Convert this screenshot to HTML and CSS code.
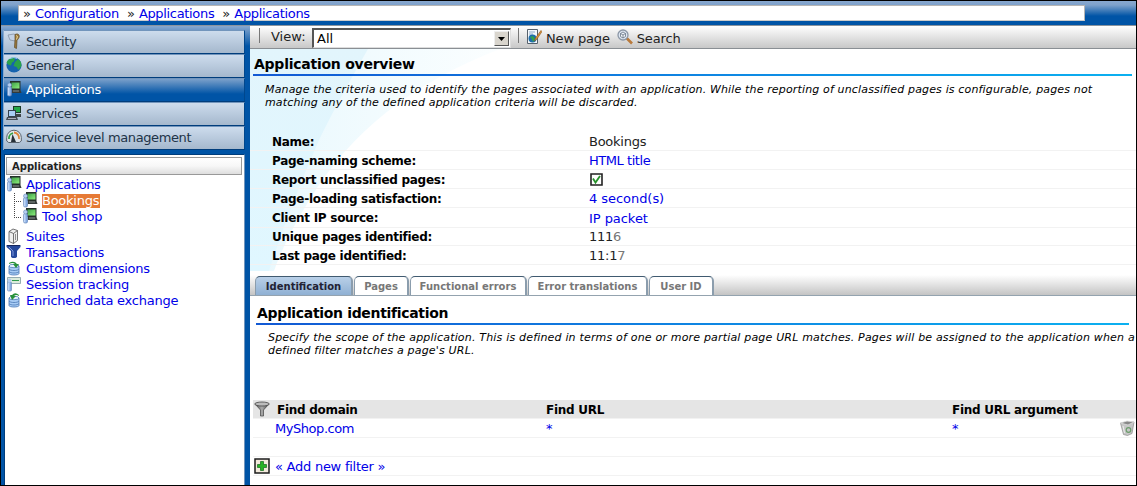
FILE: index.html
```html
<!DOCTYPE html>
<html lang="en">
<head>
<meta charset="utf-8">
<title>Application overview</title>
<link rel="stylesheet" href="styles.css">
</head>
<body>
<svg class="defs" width="0" height="0">
  <defs>
    <linearGradient id="screen" x1="0" y1="0" x2="1" y2="1"><stop offset="0" stop-color="#3f9f48"/><stop offset="1" stop-color="#8cf07c"/></linearGradient>
    <linearGradient id="person" x1="0" x2="1"><stop offset="0" stop-color="#dcecff"/><stop offset="1" stop-color="#6a96d8"/></linearGradient>
    <linearGradient id="metal" x1="0" x2="1"><stop offset="0" stop-color="#555"/><stop offset=".5" stop-color="#aaa"/><stop offset="1" stop-color="#444"/></linearGradient>
  </defs>
  <symbol id="app" viewBox="0 0 16 16">
    <path d="M4 0h10.500v9H4z" fill="#24302a"/><path d="M5.500 1.500h8v6h-8z" fill="url(#screen)"/>
    <path d="M6 9h8.500l1 3H6z" fill="#343b3b"/><path d="M7 10h6" stroke="#85908c"/>
    <rect x="1.500" y="5.500" width="4" height="9.500" rx="1.500" fill="url(#person)" stroke="#6889bb" stroke-width=".7"/><circle cx="3.500" cy="4" r="2" fill="#b6cef0" stroke="#6889bb" stroke-width=".6"/>
  </symbol>
  <symbol id="db" viewBox="0 0 16 16">
    <path d="M3 6v7.500c0 2 10 2 10 0V6z" fill="#a8ccf5" stroke="#4d7ab5" stroke-width=".8"/>
    <ellipse cx="8" cy="6" rx="5" ry="1.700" fill="#e6f2ff" stroke="#4d7ab5" stroke-width=".8"/>
    <path d="M3 9c1 2 9 2 10 0M3 11.500c1 2 9 2 10 0" fill="none" stroke="#4d7ab5" stroke-width=".8"/>
  </symbol>
</svg>

<div class="window">
  <header class="topbar"><nav class="crumbs"><span>»</span><a>Configuration</a><span>»</span><a>Applications</a><span>»</span><a>Applications</a></nav></header>
  <div class="body">
    <aside class="side">
      <ul class="nav">
        <li><svg viewBox="0 0 16 16"><path d="M2 2l6-1 3 2-2 5-5-1z" fill="#c3d2e6" stroke="#7e8b9c" stroke-width=".7"/><path d="M9 1.500c3-1.500 5 .5 4 3l-2 3-.5 8-2-1 .5-8z" fill="#9a783a" stroke="#5d4926" stroke-width=".7"/><path d="M10 2.500l1.500 1-1 3" stroke="#eedb9b" fill="none"/></svg>Security</li>
        <li><svg viewBox="0 0 16 16"><circle cx="8" cy="8" r="7.600" fill="#1663ae"/><path d="M2 3l4-2.500 3 1-1 3-2 1-1 3-3-1-1.500-2zM9 5l3-3 3 3 .5 4-3 4-2-3-3-1z" fill="#2aa24c"/><path d="M4 1.500q4-2 7 0" stroke="#8cc9ed" fill="none"/></svg>General</li>
        <li class="on"><svg><use href="#app"/></svg>Applications</li>
        <li><svg viewBox="0 0 16 16"><path d="M7 1h8v7H7z" fill="#1c3a27"/><path d="M8 2h6v5H8z" fill="#25a648"/><path d="M9 9h6v3H9z" fill="#3d4548"/><path d="M2 5h8v7H2z" fill="#35414e"/><path d="M3 6h6v5H3z" fill="#a9cdf5"/><path d="M1 12h10l1 3H0z" fill="#444c55"/><path d="M2 13.500h8" stroke="#aab"/></svg>Services</li>
        <li><svg viewBox="0 0 16 16"><path d="M.7 12V8.500a7.300 7.300 0 0 1 14.600 0V12l-2 1.500H2.700z" fill="#e1e6eb" stroke="#59636e"/><path d="M3 10a5.500 5.500 0 0 1 4-6" fill="none" stroke="#38a345" stroke-width="1.800"/><path d="M8 3.500a5.500 5.500 0 0 1 5 6.500" fill="none" stroke="#df863a" stroke-width="1.800"/><path d="M6.500 5l3.500 8H5z" fill="#273038"/></svg>Service level management</li>
      </ul>
      <section class="panel">
        <h3>Applications</h3>
        <ul class="tree">
          <li class="root"><svg><use href="#app"/></svg><a>Applications</a></li>
          <li class="child"><svg><use href="#app"/></svg><a class="sel">Bookings</a></li>
          <li class="child last"><svg><use href="#app"/></svg><a>Tool shop</a></li>
          <li><svg viewBox="0 0 16 16"><path d="M3 3.500l4-2.500 4.500 1.500v10l-4 3L3 13.500z" fill="#eee" stroke="#555" stroke-width=".8"/><path d="M3 3.500l4.500 2 4-3M7.500 5.500v10" fill="none" stroke="#555" stroke-width=".8"/><path d="M9.500 6v6" stroke="#777" stroke-width=".8"/></svg><a>Suites</a></li>
          <li><svg viewBox="0 0 16 16"><path d="M.5 1h14v2l-3.500 4v6l-1.500 1h-3L5 13V7L.5 3z" fill="#26499c"/><path d="M3 3l4 4v5" stroke="#809ae0" fill="none"/><path d="M1 1.500h13" stroke="#16265c"/></svg><a>Transactions</a></li>
          <li><svg viewBox="0 0 16 16"><use href="#db"/><path d="M3 3q5-3 8 1h2l-3 4-3-4h2Q7 2 3 4z" fill="#28923a"/></svg><a>Custom dimensions</a></li>
          <li><svg viewBox="0 0 16 16"><path d="M1.500 1.500h13v6h-13z" fill="#dcecdc" stroke="#7e99a2" stroke-width=".8"/><path d="M6 4.500h7" stroke="#2e9b4c"/><rect x="1.500" y="6" width="4" height="9" rx="1" fill="url(#person)" stroke="#7593c0" stroke-width=".7"/><circle cx="3.500" cy="4.500" r="1.900" fill="#b6cef0"/></svg><a>Session tracking</a></li>
          <li><svg viewBox="0 0 16 16"><use href="#db"/><path d="M13 3Q9-.5 6 3H4l2 5 4-4H8q2-2 5 0z" fill="#28923a"/></svg><a>Enriched data exchange</a></li>
        </ul>
      </section>
    </aside>
    <main class="main">
      <div class="toolbar">
        <i class="sep"></i><span class="view">View:</span>
        <div class="select"><span>All</span><b><svg viewBox="0 0 7 4"><path d="M0 0h7L3.500 4z"/></svg></b></div>
        <i class="sep two"></i>
        <svg class="ic" viewBox="0 0 16 16"><path d="M1.500.5h10v14h-10z" fill="#f4f8fc" stroke="#56616c"/><path d="M3 3h6M3 5h4" stroke="#8cabcb"/><circle cx="6.500" cy="9.500" r="4" fill="#1f6dab"/><path d="M4 8l3-1 2 3-2 3-1-3z" fill="#31a34b"/><path d="M15 1.500L9.500 9l-1 3 2.500-2 5-7.500z" fill="#de9237" stroke="#85551f" stroke-width=".6"/></svg>
        <span class="act">New page</span>
        <svg class="ic" viewBox="0 0 16 16"><path d="M9.500 9l5.500 5.500" stroke="#b97a3c" stroke-width="2.600"/><circle cx="6" cy="6" r="5" fill="#dde6f2" stroke="#8c97a6" stroke-width="1.300"/><path d="M3.500 4.500L6 3l2.500 1.500v3L6 9 3.500 7.500zM3.500 4.500L6 6l2.500-1.500M6 6v3" fill="#f6f8fb" stroke="#667384" stroke-width=".8"/></svg>
        <span class="act">Search</span>
      </div>
      <section class="overview">
        <svg class="swoosh" viewBox="0 0 340 222" preserveAspectRatio="none">
          <defs>
            <linearGradient id="sa" x1="0" y1="0" x2="0" y2="1"><stop offset="0" stop-color="#e2f5fc"/><stop offset="1" stop-color="#e0f7ff"/></linearGradient>
            <linearGradient id="sb" x1="0" x2="1"><stop offset="0" stop-color="#e8f8fd"/><stop offset="1" stop-color="#fbfeff"/></linearGradient>
          </defs>
          <path d="M0 0h250Q120 50 60 150 35 190 24 222H0z" fill="url(#sb)"/>
          <path d="M0 0h118Q88 52 69 91 38 162 19 222H0z" fill="url(#sa)"/>
        </svg>
        <h1>Application overview</h1>
        <p class="desc">Manage the criteria used to identify the pages associated with an application. While the reporting of unclassified pages is configurable, pages not<br>matching any of the defined application criteria will be discarded.</p>
        <dl class="props">
          <div><dt>Name:</dt><dd>Bookings</dd></div>
          <div><dt>Page-naming scheme:</dt><dd><a class="tight">HTML title</a></dd></div>
          <div><dt>Report unclassified pages:</dt><dd><svg class="check" viewBox="0 0 13 13"><path d="M1 1h11v11H1z" fill="#fff" stroke="#222" stroke-width="1.600"/><path d="M3 5.500l2.500 4L10 3" fill="none" stroke="#27932b" stroke-width="1.800"/></svg></dd></div>
          <div><dt>Page-loading satisfaction:</dt><dd><a class="loose">4 second(s)</a></dd></div>
          <div class="tall"><dt>Client IP source:</dt><dd><a class="loose">IP packet</a></dd></div>
          <div class="short"><dt>Unique pages identified:</dt><dd>111<em>6</em></dd></div>
          <div><dt>Last page identified:</dt><dd>11:1<em>7</em></dd></div>
        </dl>
      </section>
      <nav class="tabs"><a class="on t1">Identification</a><a class="t2">Pages</a><a class="t3">Functional errors</a><a class="t4">Error translations</a><a class="t5">User ID</a></nav>
      <section class="ident">
        <h1>Application identification</h1>
        <p class="desc">Specify the scope of the application. This is defined in terms of one or more partial page URL matches. Pages will be assigned to the application when a<br>defined filter matches a page's URL.</p>
        <div class="grid">
          <div class="row head"><svg viewBox="0 0 16 16"><path d="M1 3l5.500 6v6h3V9L15 3z" fill="url(#metal)" stroke="#444" stroke-width=".7"/><ellipse cx="8" cy="3" rx="7.300" ry="2" fill="#bbb" stroke="#444" stroke-width=".8"/></svg><span>Find domain</span><span>Find URL</span><span>Find URL argument</span></div>
          <div class="row"><i></i><a class="tight">MyShop.com</a><a>*</a><a>*</a><svg viewBox="0 0 16 16"><path d="M1.500 3l3 11.500 4 1 4.500-2L15 2z" fill="#c6c6c6" stroke="#8b8b8b" stroke-width=".7"/><path d="M1.500 3L8 1l7 1-6 3z" fill="#888" stroke="#ddd" stroke-width=".8"/><circle cx="9.500" cy="10" r="2.300" fill="none" stroke="#6c9d6c" stroke-width="1.200"/><path d="M4 6l1.500 7" stroke="#eee"/></svg></div>
          <div class="row"></div>
          <div class="row"><svg viewBox="0 0 16 16"><path d="M1 1h14v14H1z" fill="#f3eadc" stroke="#1c1c1c" stroke-width="1.500"/><path d="M6.500 3.500h3v3h3v3h-3v3h-3v-3h-3v-3h3z" fill="#27b324" stroke="#12691b" stroke-width=".7"/></svg><a>« Add new filter »</a></div>
        </div>
      </section>
    </main>
  </div>
</div>
</body>
</html>
```
FILE: styles.css
```css
* { box-sizing: border-box; }
body { margin: 0; font-family: "DejaVu Sans", Verdana, sans-serif; font-size: 13px; letter-spacing: -.25px; color: #000; }
ul, dl, dd, p, h1, h3 { margin: 0; padding: 0; list-style: none; }
a { color: #0000e8; text-decoration: none; white-space: nowrap; }
svg { display: block; flex: none; }
.defs { position: absolute; }
.window { width: 1137px; height: 486px; border: 1px solid #000; overflow: hidden; display: flex; flex-direction: column; background: #0054a6; }

.topbar { height: 25px; flex: none; padding: 4px 51px 0 17px; background: linear-gradient(#88a8cf 0, #7fa2cb 4px, #0054a6 15px); border-bottom: 1px solid #8a949e; }
.crumbs { height: 16px; background: #fff; border: 1px solid #b5b5b5; border-bottom-color: #ccc; display: flex; line-height: 15px; padding-left: 4px; letter-spacing: -.33px; }
.crumbs span { width: 12px; color: #222; }
.crumbs a { margin-right: 8px; }

.body { flex: 1; display: flex; min-height: 0; }
.side { width: 249px; flex: none; display: flex; flex-direction: column; padding: 4px 5px 0 3px; background: linear-gradient(#88a8cf 0, #0054a6 20px); }
.nav { border-left: 1px solid #89aad0; margin-left: -1px; }
.nav li { height: 24px; display: flex; align-items: center; gap: 4px; padding-left: 2px; line-height: 22px; color: #213448; letter-spacing: -.38px; background: linear-gradient(#cddced, #a5b8cd); border-top: 1px solid #7295bc; border-bottom: 1px solid #003d7c; border-right: 1px solid #00478d; }
.nav svg { width: 16px; height: 16px; margin-top: -2px; }
.nav .on { color: #fff; background: linear-gradient(#7ba0ca, #0054a6 68%); }
.panel { flex: 1; margin-top: 4px; padding: 2px 2px 0 1px; background: #fff; border: 1px solid #003d7c; border-right-color: #7295bc; border-bottom: 0; }
.panel h3 { height: 18px; line-height: 17px; padding-left: 5px; font-size: 10px; letter-spacing: 0; color: #222; border: 1px solid #999; background: linear-gradient(#fff, #f7f7f7 50%, #dedede); }
.tree { padding-top: 2px; }
.tree li { height: 16px; display: flex; gap: 4px; line-height: 16px; }
.tree svg { width: 16px; height: 16px; margin-top: -1px; }
.tree .root { letter-spacing: -.42px; }
.tree .child { margin-left: 8px; padding-left: 8px; background: repeating-linear-gradient(#444 0 1px, transparent 1px 2px) 0 0 / 1px 16px no-repeat, repeating-linear-gradient(90deg, #444 0 1px, transparent 1px 2px) 0 8px / 8px 1px no-repeat; }
.tree .child.last { margin-bottom: 4px; letter-spacing: 0; background-size: 1px 8px, 8px 1px; }
.sel { color: #fff; background: #e67a35; height: 14px; line-height: 14px; margin-top: 1px; padding: 0 1px 0 0; }

.main { flex: 1; min-width: 0; display: flex; flex-direction: column; background: #fff; }
.toolbar { height: 23px; flex: none; display: flex; align-items: flex-start; line-height: 25px; letter-spacing: 0; color: #222; background: linear-gradient(#fff, #c8c8c8); border-bottom: 1px solid #8a8f94; }
.sep { width: 1px; height: 15px; background: #777; margin: 2px 0 0 9px; flex: none; }
.view { line-height: 21px; margin-left: 11px; width: 41px; white-space: nowrap; }
.select { width: 199px; height: 20px; margin-top: 2px; border: 2px solid #555; border-right: 1px solid #ddd; border-bottom: 1px solid #ddd; background: #fff; display: flex; justify-content: space-between; line-height: 17px; padding-left: 3px; color: #000; }
.select b { width: 15px; height: 15px; margin: 1px 1px 0; background: #d9d5cd; border: 1px solid #eee; border-right-color: #555; border-bottom-color: #555; display: flex; align-items: center; justify-content: center; }
.select b svg { width: 7px; height: 4px; }
.sep.two { margin-left: 7px; }
.ic { width: 16px; height: 16px; margin: 3px 0 0 7px; }
.act { margin-left: 4px; letter-spacing: -.15px; white-space: nowrap; }

h1 { font-size: 14px; letter-spacing: -.25px; line-height: 18px; }
h1::after { content: ""; display: block; height: 2px; background: linear-gradient(90deg, #1259d4, #0bb0f0); }
.desc { font-size: 11px; font-style: italic; line-height: 13px; letter-spacing: .15px; white-space: nowrap; padding-left: 12px; }
.overview { position: relative; height: 223px; flex: none; padding: 7px 4px 0 3px; isolation: isolate; }
.swoosh { position: absolute; left: 0; top: 0; width: 340px; height: 222px; z-index: -1; }
.overview h1 { text-indent: 1px; line-height: 17px; padding-bottom: 0; }
.overview h1::after { margin-top: 1px; }
.overview .desc { margin-top: 7px; }
.props { margin: 23px -4px 0 -3px; }
.props div { display: flex; height: 19px; line-height: 20px; border-bottom: 1px solid #f2f2f2; }
.props .tall { height: 20px; line-height: 21px; }
.props .short { height: 18px; line-height: 18px; }
.props dt { width: 339px; padding-left: 22px; font-size: 12px; font-weight: bold; letter-spacing: -.28px; white-space: nowrap; }
.props em { font-style: normal; color: #777; }
.props dd { color: #222; }
.tight { letter-spacing: -.45px; }
.loose { letter-spacing: -.05px; }
.check { width: 13px; height: 13px; margin: 3px 0 0 1px; }

.tabs { height: 24px; flex: none; display: flex; align-items: flex-start; padding: 4px 0 0 5px; background: linear-gradient(#fff 3px, #c4c4c4 23px); border-bottom: 1px solid #94a3af; }
.tabs a { height: 19px; line-height: 19px; margin-right: 1px; text-align: center; font-size: 10px; font-weight: bold; letter-spacing: 0; color: #777; background: #fff; border: 1px solid #8b9dad; border-top-color: #405a70; border-right-width: 2px; border-bottom: 0; border-radius: 5px 5px 0 0; }
.tabs .on { color: #223; background: linear-gradient(#b9d0e8, #8fb0d3); }
.t1 { width: 98px; } .t2 { width: 55px; } .t3 { width: 117px; } .t4 { width: 120px; } .t5 { width: 65px; }

.ident { flex: 1; padding: 8px 0 0 3px; min-height: 0; }
.ident h1 { margin: 0 7px 0 3px; text-indent: 1px; letter-spacing: -.33px; line-height: 19px; }
.ident .desc { margin-top: 6px; padding-left: 15px; letter-spacing: .183px; }
.grid { margin-top: 43px; }
.row { height: 19px; display: grid; grid-template-columns: 22px 271px 406px 166px 16px; line-height: 20px; border-bottom: 1px solid #f2f2f2; }
.row svg { width: 16px; height: 16px; margin: 1px 0 0 1px; }
.row.head { background: #e5e5e5; font-size: 12px; font-weight: bold; letter-spacing: -.28px; }
.row.head span:nth-child(2) { padding-left: 2px; }
```
